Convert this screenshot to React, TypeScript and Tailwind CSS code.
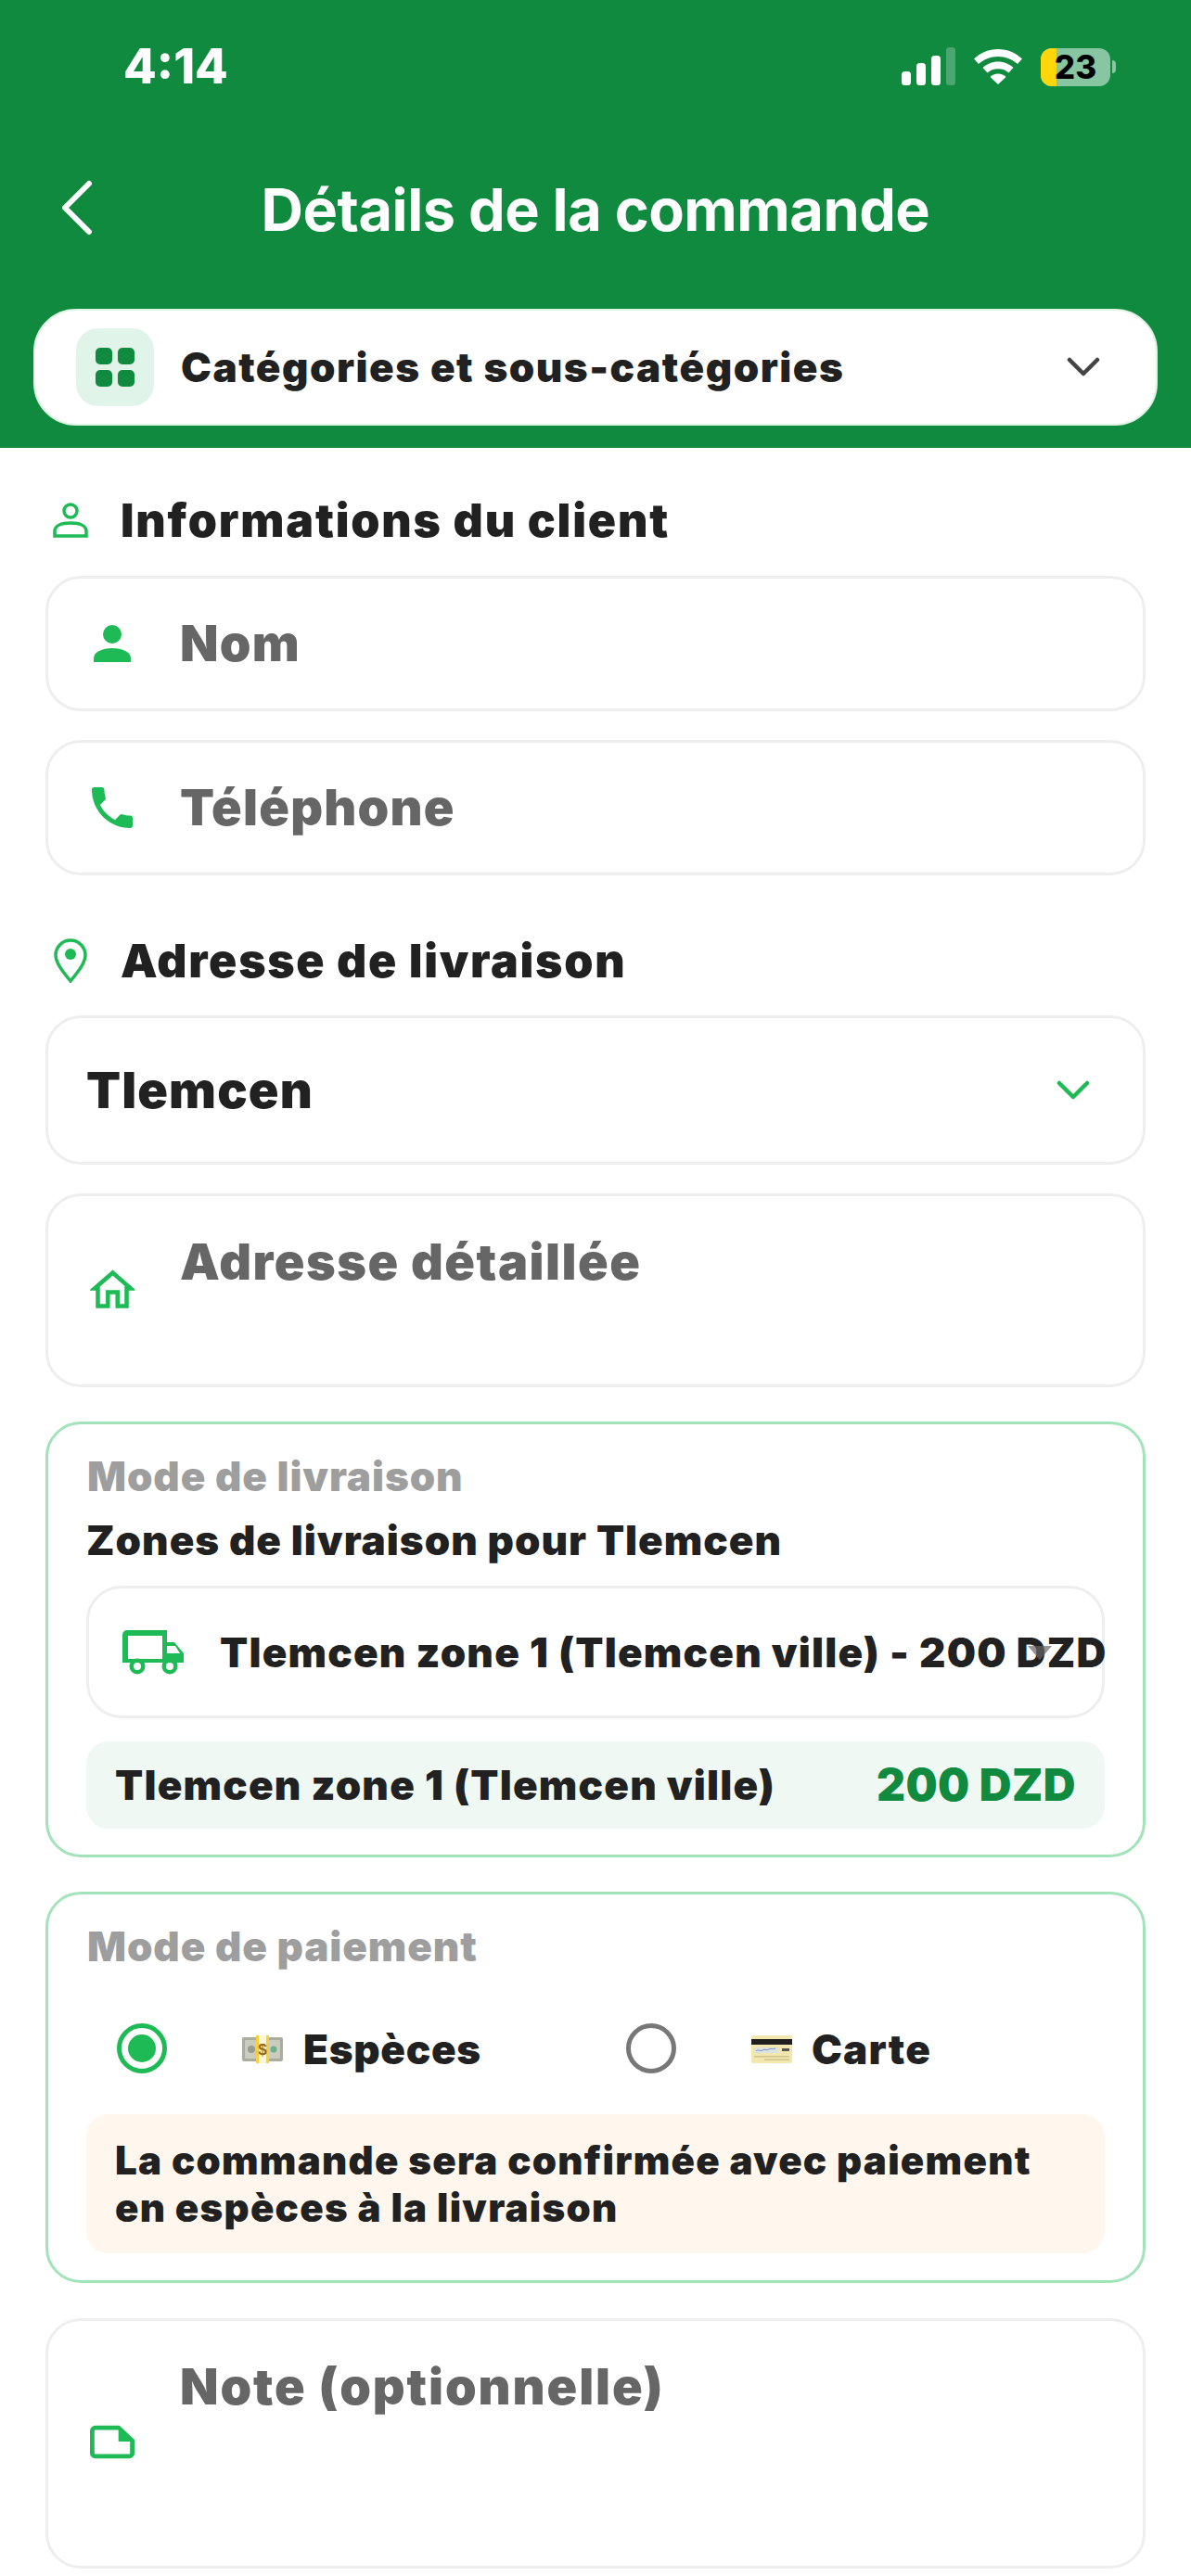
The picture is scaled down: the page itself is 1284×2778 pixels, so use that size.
import React from "react";

function FieldIcon({ children }: { children: React.ReactNode }) {
  return <div className="flex w-[48px] shrink-0 justify-center">{children}</div>;
}

function Signal() {
  return (
    <svg width="58" height="42" viewBox="0 0 58 42" className="block">
      <rect x="0" y="26" width="10" height="15" rx="3.5" fill="#fff" />
      <rect x="16" y="17" width="10" height="24" rx="3.5" fill="#fff" />
      <rect x="32" y="9" width="10" height="32" rx="3.5" fill="#fff" />
      <rect x="48" y="0" width="10" height="41" rx="3.5" fill="#fff" fillOpacity="0.25" />
    </svg>
  );
}

function Wifi() {
  return (
    <svg width="52" height="38" viewBox="0 0 52 38" className="block">
      <path d="M26 0C16 0 7 4 0 10.500L5 16C10.500 11 18 8 26 8s15.500 3 21 8l5-5.500C45 4 36 0 26 0Z" fill="#fff" />
      <path d="M26 13.500c-6.500 0-12 2.500-16.500 6.500l5 5.500c3-2.800 7-4.300 11.500-4.300s8.500 1.500 11.500 4.300l5-5.500C38 16 32.500 13.500 26 13.500Z" fill="#fff" />
      <path d="M26 26.500c-3.500 0-6.500 1.300-8.500 3.500L26 38l8.500-8c-2-2.200-5-3.500-8.500-3.500Z" fill="#fff" />
    </svg>
  );
}

function Banknote() {
  return (
    <svg width="44" height="30" viewBox="0 0 44 30" className="block">
      <rect x="0" y="2" width="44" height="26" rx="2" fill="#a9ad9d" />
      <rect x="3" y="5" width="38" height="20" rx="1" fill="#c9ccbe" />
      <circle cx="10" cy="15" r="4" fill="#989c8c" />
      <circle cx="34" cy="15" r="3.500" fill="#6fb08a" />
      <rect x="15" y="0" width="14" height="30" fill="#fff6d6" />
      <rect x="15" y="0" width="3" height="30" fill="#f7cf3c" />
      <rect x="26" y="0" width="3" height="30" fill="#f7cf3c" />
      <text x="22" y="21" textAnchor="middle" fontSize="17" fontWeight="700" fill="#93681a" fontFamily="Liberation Sans">$</text>
    </svg>
  );
}

function CreditCard() {
  return (
    <svg width="44" height="30" viewBox="0 0 44 30" className="block">
      <rect x="0" y="0" width="44" height="30" rx="2" fill="#f2e7ae" />
      <rect x="0" y="4" width="44" height="6" fill="#1f1f1f" />
      <rect x="3" y="13" width="26" height="6" fill="#dfe3e0" />
      <path d="M5 17c3-3 4 1 7-1s4 1 7-1 3 1 7-1" fill="none" stroke="#5b7fc7" strokeWidth="0.800" />
      <rect x="33" y="14" width="8" height="3" fill="#555" />
      <rect x="3" y="22" width="38" height="1.500" fill="#cfc48c" />
      <rect x="14" y="25.500" width="27" height="1.500" fill="#cfc48c" />
    </svg>
  );
}

function Radio({ checked }: { checked?: boolean }) {
  return (
    <div
      className={
        checked
          ? "flex h-[54px] w-[54px] items-center justify-center rounded-full border-[5px] border-[#1dba55]"
          : "flex h-[54px] w-[54px] items-center justify-center rounded-full border-[5px] border-[#777777]"
      }
    >
      {checked && <div className="h-[30px] w-[30px] rounded-full bg-[#1dba55]" />}
    </div>
  );
}

export default function App(): React.ReactElement {
  return (
    <div className="h-[2778px] w-[1284px] overflow-hidden bg-white font-[Inter,sans-serif] text-[#212121]">
      {/* Green header */}
      <header className="h-[483px] bg-[#0f8a3f] px-[36px] pt-[50px]">
        <div className="flex h-[44px] items-center justify-between pl-[97px]">
          <span className="text-[52px] font-extrabold leading-none text-white">4:14</span>
          <div className="flex items-center gap-[20px] pr-[45px]">
            <Signal />
            <Wifi />
            <div className="flex items-center gap-[2px]">
              <div className="relative flex h-[41px] w-[75px] items-center justify-center overflow-hidden rounded-[12px] bg-[#87c6a0]">
                <div className="absolute inset-y-0 left-0 w-[17px] bg-[#ffd60a]" />
                <span className="relative text-[35px] font-extrabold leading-none text-black">23</span>
              </div>
              <div className="h-[14px] w-[4px] rounded-r-full bg-[#87c6a0]" />
            </div>
          </div>
        </div>

        <div className="relative mt-[94px] flex h-[76px] items-center justify-center">
          <svg width="36" height="60" viewBox="0 0 36 60" className="absolute left-[28px] top-[6px]">
            <path d="M32 4 6 30l26 26" fill="none" stroke="#fff" strokeWidth="6" strokeLinecap="round" strokeLinejoin="round" />
          </svg>
          <h1 className="text-[63px] font-bold leading-none tracking-[-0.5px] text-white">Détails de la commande</h1>
        </div>

        <div className="mt-[69px] flex h-[126px] items-center rounded-[46px] border-2 border-[#dff3e6] bg-white pl-[44px] pr-[60px]">
          <div className="flex h-[84px] w-[84px] items-center justify-center rounded-[24px] bg-[#e1f4e9]">
            <svg width="42" height="42" viewBox="0 0 42 42">
              <rect x="0" y="0" width="18" height="18" rx="5" fill="#0f8a3f" />
              <rect x="24" y="0" width="18" height="18" rx="5" fill="#0f8a3f" />
              <rect x="0" y="24" width="18" height="18" rx="5" fill="#0f8a3f" />
              <rect x="24" y="24" width="18" height="18" rx="5" fill="#0f8a3f" />
            </svg>
          </div>
          <span className="ml-[29px] flex-1 text-[44px] font-black leading-none tracking-[1.5px]">Catégories et sous-catégories</span>
          <svg width="36" height="24" viewBox="0 0 36 24">
            <path d="M3 4l15 15L33 4" fill="none" stroke="#444" strokeWidth="4.500" strokeLinecap="round" strokeLinejoin="round" />
          </svg>
        </div>
      </header>

      <main className="px-[49px]">
        {/* Client */}
        <div className="flex h-[138px] items-center gap-[35px] pl-[8px] pt-[18px]">
          <svg width="38" height="38" viewBox="0 0 38 38">
            <circle cx="19" cy="9" r="7" fill="none" stroke="#1dba55" strokeWidth="3.500" />
            <path d="M2 36v-5c0-6 7-9 17-9s17 3 17 9v5Z" fill="none" stroke="#1dba55" strokeWidth="3.500" />
          </svg>
          <h2 className="text-[50px] font-black leading-none tracking-[1.8px]">Informations du client</h2>
        </div>

        <div className="flex h-[146px] items-center rounded-[38px] border-[3px] border-[#eeeeee] pl-[45px]">
          <FieldIcon>
            <svg width="40" height="40" viewBox="0 0 40 40">
              <circle cx="20" cy="10" r="10" fill="#1dba55" />
              <path d="M0 40v-4c0-7 9-11 20-11s20 4 20 11v4Z" fill="#1dba55" />
            </svg>
          </FieldIcon>
          <span className="ml-[49px] text-[54px] font-black leading-none tracking-[1.2px] text-[#666666]">Nom</span>
        </div>

        <div className="mt-[31px] flex h-[146px] items-center rounded-[38px] border-[3px] border-[#eeeeee] pl-[45px]">
          <FieldIcon>
            <svg width="44" height="44" viewBox="3 3 18 18">
              <path d="M6.620 10.790c1.440 2.830 3.760 5.140 6.590 6.590l2.200-2.200c.27-.27.67-.36 1.020-.24 1.120.37 2.330.57 3.570.57.55 0 1 .45 1 1V20c0 .55-.45 1-1 1-9.390 0-17-7.610-17-17 0-.55.45-1 1-1h3.500c.55 0 1 .45 1 1 0 1.250.2 2.450.57 3.570.11.35.03.74-.25 1.020l-2.200 2.200z" fill="#1dba55" />
            </svg>
          </FieldIcon>
          <span className="ml-[49px] text-[54px] font-black leading-none tracking-[1.2px] text-[#666666]">Téléphone</span>
        </div>

        {/* Address */}
        <div className="flex h-[151px] items-center gap-[35px] pl-[8px] pt-[32px]">
          <svg width="38" height="48" viewBox="0 0 38 48">
            <path d="M19 46C10 35 3 26 3 18a16 16 0 0 1 32 0c0 8-7 17-16 28Z" fill="none" stroke="#1dba55" strokeWidth="3.500" />
            <circle cx="19" cy="17" r="6" fill="#1dba55" />
          </svg>
          <h2 className="text-[50px] font-black leading-none tracking-[1.7px]">Adresse de livraison</h2>
        </div>

        <div className="flex h-[161px] items-center justify-between rounded-[38px] border-[3px] border-[#eeeeee] pl-[41px] pr-[57px]">
          <span className="text-[54px] font-black leading-none tracking-[1.1px]">Tlemcen</span>
          <svg width="36" height="24" viewBox="0 0 36 24">
            <path d="M3 4l15 15L33 4" fill="none" stroke="#1dba55" strokeWidth="4.500" strokeLinecap="round" strokeLinejoin="round" />
          </svg>
        </div>

        <div className="mt-[31px] flex h-[209px] rounded-[38px] border-[3px] border-[#eeeeee] pl-[45px]">
          <FieldIcon>
            <svg width="48" height="42" viewBox="0 0 48 42" className="mt-[79px]">
              <path d="M5 20.500 24.500 3.500 44 20.500H39.500V39.500H29.700V24.500H19.300V39.500H8.500V20.500Z" fill="none" stroke="#1dba55" strokeWidth="4.500" />
            </svg>
          </FieldIcon>
          <span className="ml-[49px] mt-[44px] text-[54px] font-black leading-none tracking-[1.5px] text-[#666666]">Adresse détaillée</span>
        </div>

        {/* Delivery */}
        <section className="mt-[37px] h-[470px] rounded-[38px] border-[3px] border-[#a3e3b9] px-[41px] pt-[34px]">
          <div className="pl-[1px] text-[44px] font-black leading-none tracking-[0.9px] text-[#9e9e9e]">Mode de livraison</div>
          <div className="mt-[25px] text-[44px] font-black leading-none tracking-[1px]">Zones de livraison pour Tlemcen</div>
          <div className="relative mt-[27px] flex h-[143px] items-center rounded-[38px] border-[3px] border-[#eeeeee] pl-[36px]">
            <svg width="66" height="48" viewBox="0 0 66 48" className="shrink-0">
              <path fillRule="evenodd" d="M5 0H48V13H56L66 25V35H0V5A5 5 0 0 1 5 0ZM6 6V31H43V6ZM48 17V25H62L57 17Z" fill="#1dba55" />
              <circle cx="16" cy="39" r="8.500" fill="#1dba55" />
              <circle cx="16" cy="39" r="4" fill="#fff" />
              <circle cx="51" cy="39" r="8.500" fill="#1dba55" />
              <circle cx="51" cy="39" r="4" fill="#fff" />
            </svg>
            <span className="ml-[39px] whitespace-nowrap text-[44px] font-black leading-none tracking-[1.2px]">Tlemcen zone 1 (Tlemcen ville) - 200 DZD</span>
            <svg width="26" height="15" viewBox="0 0 26 15" className="absolute left-[1012px] top-[62px]">
              <path d="M0 0h26L13 15Z" fill="#666" fillOpacity="0.7" />
            </svg>
          </div>
          <div className="mt-[25px] flex h-[94px] items-center justify-between rounded-[24px] bg-[#eff8f2] px-[31px]">
            <span className="text-[44px] font-black leading-none tracking-[1.2px]">Tlemcen zone 1 (Tlemcen ville)</span>
            <span className="text-[48px] font-black leading-none tracking-[0.5px] text-[#0f8a3f]">200 DZD</span>
          </div>
        </section>

        {/* Payment */}
        <section className="mt-[37px] h-[422px] rounded-[38px] border-[3px] border-[#a3e3b9] px-[41px] pt-[34px]">
          <div className="pl-[1px] text-[44px] font-black leading-none tracking-[0.9px] text-[#9e9e9e]">Mode de paiement</div>
          <div className="mt-[62px] flex h-[54px] items-center pl-[33px]">
            <div className="flex w-[549px] items-center">
              <div className="-mt-[3px]"><Radio checked /></div>
              <div className="ml-[81px]"><Banknote /></div>
              <span className="ml-[22px] text-[44px] font-black leading-none tracking-[0.7px]">Espèces</span>
            </div>
            <div className="flex items-center">
              <div className="-mt-[3px]"><Radio /></div>
              <div className="ml-[81px]"><CreditCard /></div>
              <span className="ml-[21px] text-[44px] font-black leading-none tracking-[1.2px]">Carte</span>
            </div>
          </div>
          <div className="mt-[43px] flex h-[150px] flex-col justify-center rounded-[24px] bg-[#fff6ed] px-[31px] text-[42px] font-black leading-[51px] tracking-[1.25px]">
            <div>La commande sera confirmée avec paiement</div>
            <div>en espèces à la livraison</div>
          </div>
        </section>

        {/* Note */}
        <div className="mt-[38px] flex h-[270px] rounded-[38px] border-[3px] border-[#eeeeee] pl-[45px]">
          <FieldIcon>
            <svg width="50" height="38" viewBox="0 0 50 38" className="mt-[112px]">
              <path fillRule="evenodd" d="M6 0H33L50 16V31A6 6 0 0 1 44 37H6A6 6 0 0 1 0 31V6A6 6 0 0 1 6 0ZM6 5A1 1 0 0 0 5 6V31A1 1 0 0 0 6 32H44A1 1 0 0 0 45 31V18H32V5Z" fill="#1dba55" />
            </svg>
          </FieldIcon>
          <span className="ml-[49px] mt-[44px] text-[54px] font-black leading-none tracking-[1.9px] text-[#666666]">Note (optionnelle)</span>
        </div>
      </main>
    </div>
  );
}
